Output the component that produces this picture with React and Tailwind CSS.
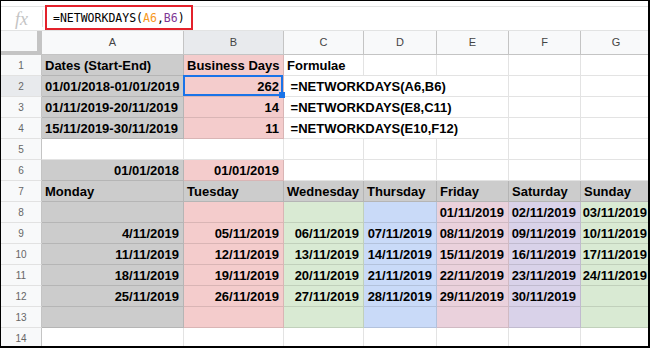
import React from "react";

const GRAY = "bg-[#cccccc]";
const PINK = "bg-[#f4cccc]";
const GREEN = "bg-[#d9ead3]";
const BLUE = "bg-[#c9daf8]";
const ROSE = "bg-[#ead1dc]";
const LILAC = "bg-[#d9d2e9]";

const WEEK_BG = [GRAY, PINK, GREEN, BLUE, ROSE, LILAC, GREEN];
const LETTERS = ["A", "B", "C", "D", "E", "F", "G"];

const L = (t, bg) => ({ t, bg });
const R = (t, bg) => ({ t, bg, r: true });
const blank = () => [{}, {}, {}, {}, {}, {}, {}];

const weeks = [
  ["", "", "", "", "01/11/2019", "02/11/2019", "03/11/2019"],
  ["4/11/2019", "05/11/2019", "06/11/2019", "07/11/2019", "08/11/2019", "09/11/2019", "10/11/2019"],
  ["11/11/2019", "12/11/2019", "13/11/2019", "14/11/2019", "15/11/2019", "16/11/2019", "17/11/2019"],
  ["18/11/2019", "19/11/2019", "20/11/2019", "21/11/2019", "22/11/2019", "23/11/2019", "24/11/2019"],
  ["25/11/2019", "26/11/2019", "27/11/2019", "28/11/2019", "29/11/2019", "30/11/2019", ""],
  ["", "", "", "", "", "", ""],
];

const rows = [
  [L("Dates (Start-End)", GRAY), L("Business Days", PINK), L("Formulae"), {}, {}, {}, {}],
  [L("01/01/2018-01/01/2019", GRAY), { t: "262", bg: PINK, r: true, sel: true }, { t: " =NETWORKDAYS(A6,B6)", noR: true }, { noR: true }, {}, {}, {}],
  [L("01/11/2019-20/11/2019", GRAY), R("14", PINK), { t: " =NETWORKDAYS(E8,C11)", noR: true }, { noR: true }, {}, {}, {}],
  [L("15/11/2019-30/11/2019", GRAY), R("11", PINK), { t: " =NETWORKDAYS(E10,F12)", noR: true }, { noR: true }, {}, {}, {}],
  blank(),
  [R("01/01/2018", GRAY), R("01/01/2019", PINK), {}, {}, {}, {}, {}],
  ["Monday", "Tuesday", "Wednesday", "Thursday", "Friday", "Saturday", "Sunday"].map((d) => L(d, GRAY)),
  ...weeks.map((w) => w.map((t, i) => R(t, WEEK_BG[i]))),
  blank(),
];

function Cell({ c }) {
  return (
    <div
      className={`relative flex h-[21px] whitespace-pre border-b border-[#0000001c] pt-[2px] text-[13px] font-bold leading-[18px] text-black ${c.bg || ""} ${c.noR ? "" : "border-r"} ${c.r ? "justify-end pr-[4px]" : "justify-start pl-[3px]"}`}
    >
      <span>{c.t}</span>
      {c.sel && (
        <div className="absolute -left-[1px] -top-[1px] right-0 bottom-0 z-10 border-2 border-[#1a73e8]">
          <div className="absolute -bottom-[4px] -right-[4px] h-[6px] w-[6px] bg-[#1a73e8]" />
        </div>
      )}
    </div>
  );
}

export default function App() {
  return (
    <div className="relative h-[348px] w-[650px] overflow-hidden border-l border-t border-b-2 border-r-2 border-black bg-white font-['Liberation_Sans',Arial,sans-serif]">
      <div className="h-[5px]" />

      {/* formula bar */}
      <div className="flex h-[25px] items-center border-y border-[#e2e3e3]">
        <div className="flex w-[41px] justify-center font-['Liberation_Serif',serif] text-[18px] italic leading-none text-[#c4c4c4]">
          fx
        </div>
        <div className="h-[17px] w-px bg-[#e0e0e0]" />
        <div className="ml-[10px] font-['DejaVu_Sans_Mono',monospace] text-[11.5px] leading-none text-black">
          =NETWORKDAYS(<span className="text-[#f7981d]">A6</span>,<span className="text-[#7e3794]">B6</span>)
        </div>
      </div>
      <div className="absolute left-[44px] top-[4px] h-[25px] w-[148px] border-2 border-[#e3212b]" />

      <div className="grid grid-cols-[41px_142px_100px_80px_73px_72px_72px_71px]">
        {/* column headers */}
        <div className="h-[24px] border-b-4 border-r-[5px] border-[#c4c4c4] bg-[#f8f9fa]" />
        {LETTERS.map((l) => (
          <div
            key={l}
            className={`flex h-[24px] items-center justify-center border-b border-r border-[#c4c4c4] text-[11px] text-[#444] ${l === "B" ? "bg-[#e8eaed]" : "bg-[#f8f9fa]"}`}
          >
            {l}
          </div>
        ))}

        {rows.map((row, i) => (
          <React.Fragment key={i}>
            <div
              className={`flex h-[21px] items-center justify-center border-b border-r border-b-[#e2e2e2] border-r-[#c4c4c4] text-[10px] text-[#666] ${i === 1 ? "bg-[#e8eaed]" : "bg-[#f8f9fa]"}`}
            >
              {i + 1}
            </div>
            {row.map((c, j) => (
              <Cell key={j} c={c} />
            ))}
          </React.Fragment>
        ))}
      </div>
    </div>
  );
}
